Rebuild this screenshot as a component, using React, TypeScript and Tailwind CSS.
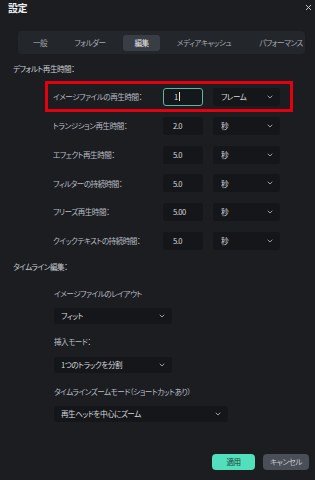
import { ChevronDown, X } from "lucide-react";

const font = "[font-family:'Noto_Sans_CJK_JP','Noto_Sans',sans-serif] [font-feature-settings:'palt'] tracking-[-0.5px] whitespace-nowrap";

const durations = [
  { label: "イメージファイルの再生時間：", value: "1", unit: "フレーム", focus: true },
  { label: "トランジション再生時間：", value: "2.0", unit: "秒" },
  { label: "エフェクト再生時間：", value: "5.0", unit: "秒" },
  { label: "フィルターの持続時間：", value: "5.0", unit: "秒" },
  { label: "フリーズ再生時間：", value: "5.00", unit: "秒" },
  { label: "クイックテキストの持続時間：", value: "5.0", unit: "秒" },
];

function Select({ text, width }: { text: string; width: string }) {
  return (
    <div className={`flex h-[16px] items-center justify-between rounded-[3px] bg-[#141619] pl-[7px] pr-[6px] ${width}`}>
      <span className="text-[7.6px] text-[#d6d8db]">{text}</span>
      <ChevronDown className="h-[8px] w-[8px] text-[#9a9ea5]" strokeWidth={3} />
    </div>
  );
}

export default function App() {
  return (
    <div className={`relative h-[480px] w-[315px] overflow-hidden bg-[#1b1d21] ${font}`}>
      {/* Title */}
      <div className="flex h-[15px] items-center justify-between pl-[8px] pr-[2px]">
        <span className="text-[10px] font-bold text-[#eceef0]">設定</span>
        <X className="h-[9px] w-[9px] text-[#cfd2d6]" strokeWidth={2.5} />
      </div>

      {/* Tabs */}
      <div className="ml-[18px] mt-[16px] flex h-[23px] w-[287px] items-center rounded-[4px] bg-[#23262b] pl-[4px] text-[7.6px] text-[#a4a8ae]">
        <div className="flex h-[16px] w-[36px] items-center justify-center">一般</div>
        <div className="ml-[12px] flex h-[16px] w-[40px] items-center justify-center">フォルダー</div>
        <div className="ml-[13px] flex h-[16px] w-[37px] items-center justify-center rounded-[3px] bg-[#393d44] text-[#e6e8ea]">編集</div>
        <div className="ml-[14px] flex h-[16px] w-[60px] items-center justify-center">メディアキャッシュ</div>
        <div className="ml-[24px] flex h-[16px] w-[46px] items-center justify-center">パフォーマンス</div>
      </div>

      {/* Default durations */}
      <div className="ml-[13px] mt-[8px] flex h-[14px] items-center text-[7.6px] text-[#c9ccd0]">デフォルト再生時間：</div>
      <div className="mt-[6.6px] flex flex-col">
        {durations.map((d) => (
          <div key={d.label} className="flex h-[28.8px] items-center pl-[53px]">
            <span className="w-[110px] text-[7.6px] text-[#b9bcc1]">{d.label}</span>
            <div
              className={`flex h-[18px] w-[40px] items-center rounded-[3px] pl-[10px] text-[7.6px] text-[#d6d8db] ${
                d.focus ? "border border-[#5fb5a4] bg-[#15181b] pl-[9px]" : "bg-[#141619]"
              }`}
            >
              {d.value}
              {d.focus && <span className="ml-[1px] h-[9px] w-px bg-[#e6e8ea]" />}
            </div>
            <div className="ml-[10px] flex h-[18px] w-[67px] items-center justify-between rounded-[3px] bg-[#141619] pl-[8px] pr-[6px]">
              <span className="text-[7.6px] text-[#d6d8db]">{d.unit}</span>
              <ChevronDown className="h-[8px] w-[8px] text-[#9a9ea5]" strokeWidth={3} />
            </div>
          </div>
        ))}
      </div>

      {/* Timeline editing */}
      <div className="ml-[13px] mt-[4.6px] flex h-[14px] items-center text-[7.6px] text-[#c9ccd0]">タイムライン編集：</div>
      <div className="flex flex-col pl-[54px]">
        <div className="mt-[14px] flex h-[12px] items-center text-[7.6px] text-[#b9bcc1]">イメージファイルのレイアウト</div>
        <div className="mt-[8px]">
          <Select text="フィット" width="w-[118px]" />
        </div>
        <div className="mt-[12px] flex h-[12px] items-center text-[7.6px] text-[#b9bcc1]">挿入モード：</div>
        <div className="mt-[9px]">
          <Select text="1つのトラックを分割" width="w-[118px]" />
        </div>
        <div className="mt-[13px] flex h-[12px] items-center text-[7.6px] text-[#b9bcc1]">タイムラインズームモード（ショートカットあり）</div>
        <div className="mt-[8px]">
          <Select text="再生ヘッドを中心にズーム" width="w-[174px]" />
        </div>
      </div>

      {/* Buttons */}
      <div className="mt-[32px] flex justify-end gap-[8px] pr-[6px]">
        <button className="flex h-[16px] w-[43px] items-center justify-center rounded-[4px] bg-[#52dfbc] text-[7.6px] text-[#1d3a33]">適用</button>
        <button className="flex h-[16px] w-[46px] items-center justify-center rounded-[4px] bg-[#4a4f57] text-[7.6px] text-[#c4c7cc]">キャンセル</button>
      </div>

      {/* Red annotation box */}
      <div className="pointer-events-none absolute left-[45px] top-[81px] h-[31px] w-[248px] border-[3px] border-[#e3000f]" />
    </div>
  );
}
